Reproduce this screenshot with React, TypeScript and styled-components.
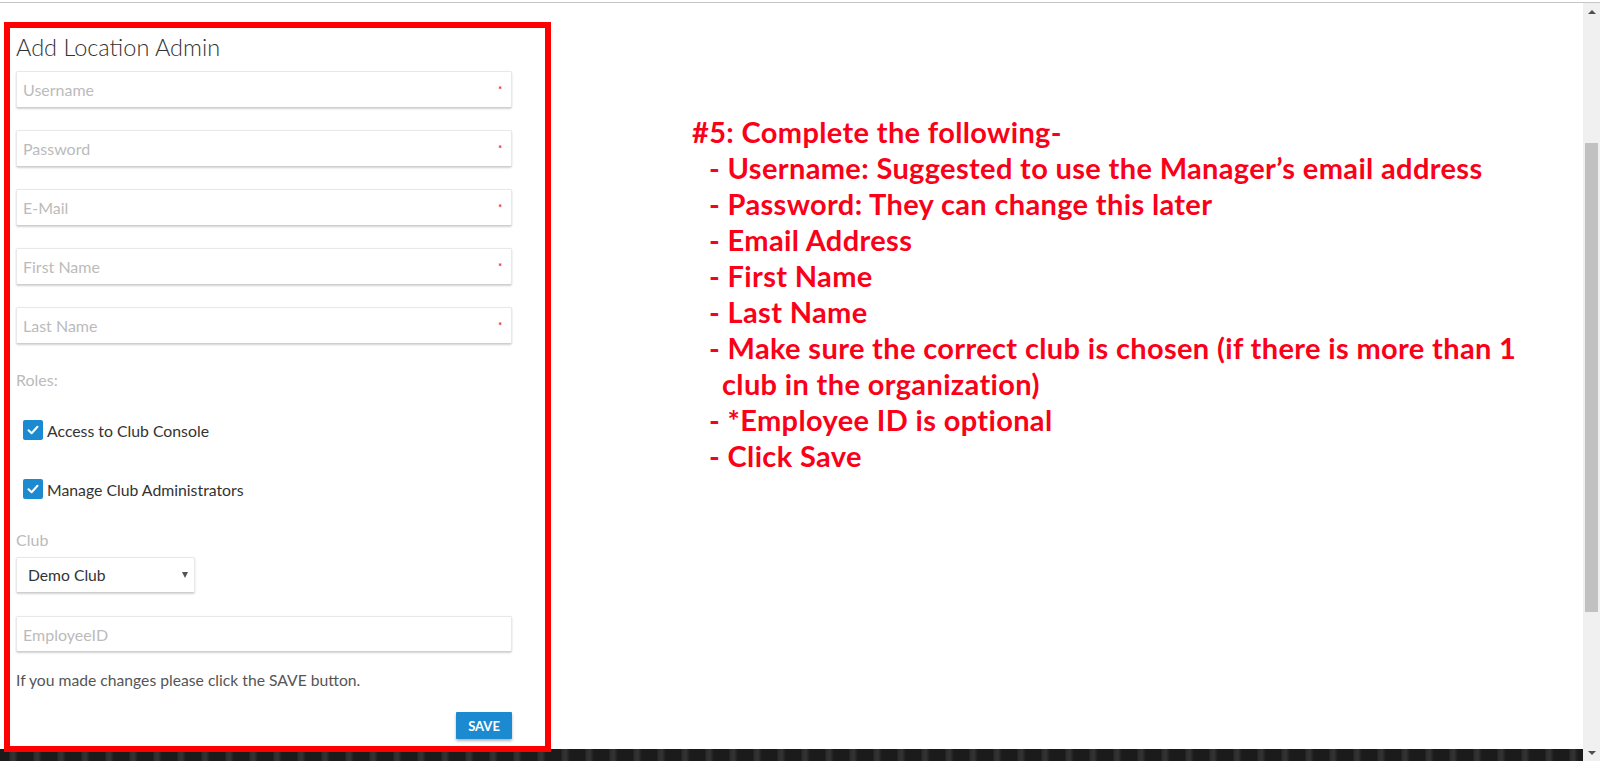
import styled, { createGlobalStyle } from 'styled-components'

const GlobalStyle = createGlobalStyle`
  html, body {
    margin: 0;
    padding: 0;
    background: #fff;
  }
  body {
    width: 1600px;
    height: 761px;
    overflow: hidden;
    font-family: Lato, "Open Sans", sans-serif;
  }
  * {
    box-sizing: border-box;
  }
`

const Screen = styled.div`
  width: 1600px;
  height: 761px;
  display: flex;
  flex-direction: column;
  background: #fff;
`

const TopRule = styled.div`
  height: 3px;
  flex: none;
  border-bottom: 1px solid #c6c6c6;
`

const Body = styled.div`
  flex: 1;
  display: flex;
  min-height: 0;
`

const Viewport = styled.div`
  flex: 1;
  display: flex;
  flex-direction: column;
  min-width: 0;
`

const Content = styled.main`
  flex: 1;
  display: flex;
  align-items: flex-start;
  min-height: 0;
`

const Footer = styled.footer`
  height: 12px;
  flex: none;
  background-color: #1d1d1d;
  background-image: repeating-linear-gradient(
    90deg,
    #1b1b1b 0px,
    #1b1b1b 9px,
    #2c2c2c 10px,
    #333 14px,
    #262626 16px,
    #1b1b1b 18px,
    #1b1b1b 24px
  );
`

// red annotation frame around the form
const Panel = styled.section`
  position: relative;
  z-index: 1;
  flex: none;
  width: 547px;
  margin: 19px 0 -3px 4px;
  border: 6px solid #ff0000;
  background: #fff;
  padding: 4px 0 7px 6px;
  display: flex;
  flex-direction: column;
  align-items: flex-start;
`

const Title = styled.h2`
  margin: 0;
  font-family: Lato, sans-serif;
  font-weight: 300;
  font-size: 23.5px;
  line-height: 30px;
  color: #333;
`

const Fields = styled.div`
  margin-top: 9px;
  display: flex;
  flex-direction: column;
  gap: 22px;
`

const Field = styled.div<{ $width?: number; $top?: number; $height?: number }>`
  width: ${p => p.$width ?? 496}px;
  height: ${p => p.$height ?? 37}px;
  margin-top: ${p => p.$top ?? 0}px;
  display: flex;
  align-items: center;
  padding: 0 9px 0 6px;
  border: 1px solid #e8e8e8;
  border-bottom-color: #cfcfcf;
  border-radius: 2px;
  box-shadow: 0 1px 2px rgba(0, 0, 0, 0.18);
  background: #fff;
`

const Input = styled.input`
  flex: 1;
  min-width: 0;
  border: 0;
  outline: 0;
  padding: 0;
  background: transparent;
  font-family: Lato, sans-serif;
  font-size: 16px;
  color: #333;

  &::placeholder {
    color: #bbbbbb;
  }
`

const Required = styled.span`
  color: #e8202c;
  font-size: 9px;
  line-height: 9px;
  font-weight: 700;
`

const Label = styled.div<{ $top: number }>`
  margin-top: ${p => p.$top}px;
  font-size: 16px;
  line-height: 18px;
  color: #bbbbbb;
`

const CheckRow = styled.label<{ $top: number }>`
  margin-top: ${p => p.$top}px;
  margin-left: 7px;
  height: 20px;
  display: flex;
  align-items: center;
  gap: 4px;
  font-size: 15.8px;
  color: #333;
`

const Box = styled.span`
  width: 20px;
  height: 20px;
  border-radius: 2px;
  background: #1b8ad1;
  display: flex;
  align-items: center;
  justify-content: center;
`

const Select = styled.div`
  margin-top: 8px;
  width: 179px;
  height: 36px;
  display: flex;
  align-items: center;
  justify-content: space-between;
  padding: 0 6px 0 11px;
  border: 1px solid #e8e8e8;
  border-bottom-color: #cfcfcf;
  border-radius: 2px;
  box-shadow: 0 1px 2px rgba(0, 0, 0, 0.18);
  font-size: 15.7px;
  color: #333;
`

const Caret = styled.span`
  width: 0;
  height: 0;
  border-left: 3px solid transparent;
  border-right: 3px solid transparent;
  border-top: 6px solid #555;
`

const Help = styled.p`
  margin: 19px 0 0;
  font-size: 15.7px;
  line-height: 18px;
  color: #555;
`

const Actions = styled.div`
  width: 496px;
  margin-top: 23px;
  display: flex;
  justify-content: flex-end;
`

const SaveButton = styled.button`
  width: 56px;
  height: 27px;
  border: 0;
  border-radius: 1px;
  background: #1b8ad1;
  color: #fff;
  font-family: Lato, sans-serif;
  font-weight: 700;
  font-size: 13px;
  padding: 0;
  box-shadow: 0 2px 3px rgba(0, 0, 0, 0.3);
`

const Notes = styled.div`
  margin: 111px 0 0 141px;
  color: #fa0019;
  font-family: Lato, sans-serif;
  font-weight: 700;
  font-size: 29px;
  letter-spacing: 0.35px;
  line-height: 36px;
  white-space: nowrap;
`

const NoteLine = styled.div<{ $indent?: number }>`
  padding-left: ${p => p.$indent ?? 0}px;
`

const Scrollbar = styled.div`
  width: 17px;
  flex: none;
  background: #f0f0f0;
  display: flex;
  flex-direction: column;
  align-items: center;
`

const ScrollButton = styled.div`
  height: 17px;
  width: 100%;
  flex: none;
  display: flex;
  align-items: center;
  justify-content: center;
`

const Arrow = styled.span<{ $down?: boolean }>`
  width: 0;
  height: 0;
  border-left: 4px solid transparent;
  border-right: 4px solid transparent;
  ${p => (p.$down ? 'border-top: 4px solid #505050;' : 'border-bottom: 4px solid #505050;')}
`

const Thumb = styled.div<{ $top: number; $height: number }>`
  width: 13px;
  margin-top: ${p => p.$top}px;
  height: ${p => p.$height}px;
  background: #c1c1c1;
`

const Spacer = styled.div`
  flex: 1;
`

const Check = () => (
  <svg width="14" height="14" viewBox="0 0 14 14" fill="none">
    <path d="M2.5 7.3 L5.6 10.2 L11.5 3.8" stroke="#fff" strokeWidth="2" strokeLinecap="round" strokeLinejoin="round" />
  </svg>
)

const required = ['Username', 'Password', 'E-Mail', 'First Name', 'Last Name']

const notes = [
  { text: '#5: Complete the following-', indent: 0 },
  { text: '- Username: Suggested to use the Manager\u2019s email address', indent: 17 },
  { text: '- Password: They can change this later', indent: 17 },
  { text: '- Email Address', indent: 17 },
  { text: '- First Name', indent: 17 },
  { text: '- Last Name', indent: 17 },
  { text: '- Make sure the correct club is chosen (if there is more than 1', indent: 17 },
  { text: 'club in the organization)', indent: 30 },
  { text: '- *Employee ID is optional', indent: 17 },
  { text: '- Click Save', indent: 17 },
]

export default function App() {
  return (
    <Screen>
      <GlobalStyle />
      <TopRule />
      <Body>
        <Viewport>
          <Content>
            <Panel>
              <Title>Add Location Admin</Title>
              <Fields>
                {required.map(name => (
                  <Field key={name}>
                    <Input placeholder={name} />
                    <Required>*</Required>
                  </Field>
                ))}
              </Fields>
              <Label $top={27}>Roles:</Label>
              <CheckRow $top={31}>
                <Box><Check /></Box>
                Access to Club Console
              </CheckRow>
              <CheckRow $top={39}>
                <Box><Check /></Box>
                Manage Club Administrators
              </CheckRow>
              <Label $top={32}>Club</Label>
              <Select>
                Demo Club
                <Caret />
              </Select>
              <Field $top={23} $height={36}>
                <Input placeholder="EmployeeID" />
              </Field>
              <Help>If you made changes please click the SAVE button.</Help>
              <Actions>
                <SaveButton>SAVE</SaveButton>
              </Actions>
            </Panel>
            <Notes>
              {notes.map(n => (
                <NoteLine key={n.text} $indent={n.indent}>{n.text}</NoteLine>
              ))}
            </Notes>
          </Content>
          <Footer />
        </Viewport>
        <Scrollbar>
          <ScrollButton><Arrow /></ScrollButton>
          <Thumb $top={123} $height={469} />
          <Spacer />
          <ScrollButton><Arrow $down /></ScrollButton>
        </Scrollbar>
      </Body>
    </Screen>
  )
}
